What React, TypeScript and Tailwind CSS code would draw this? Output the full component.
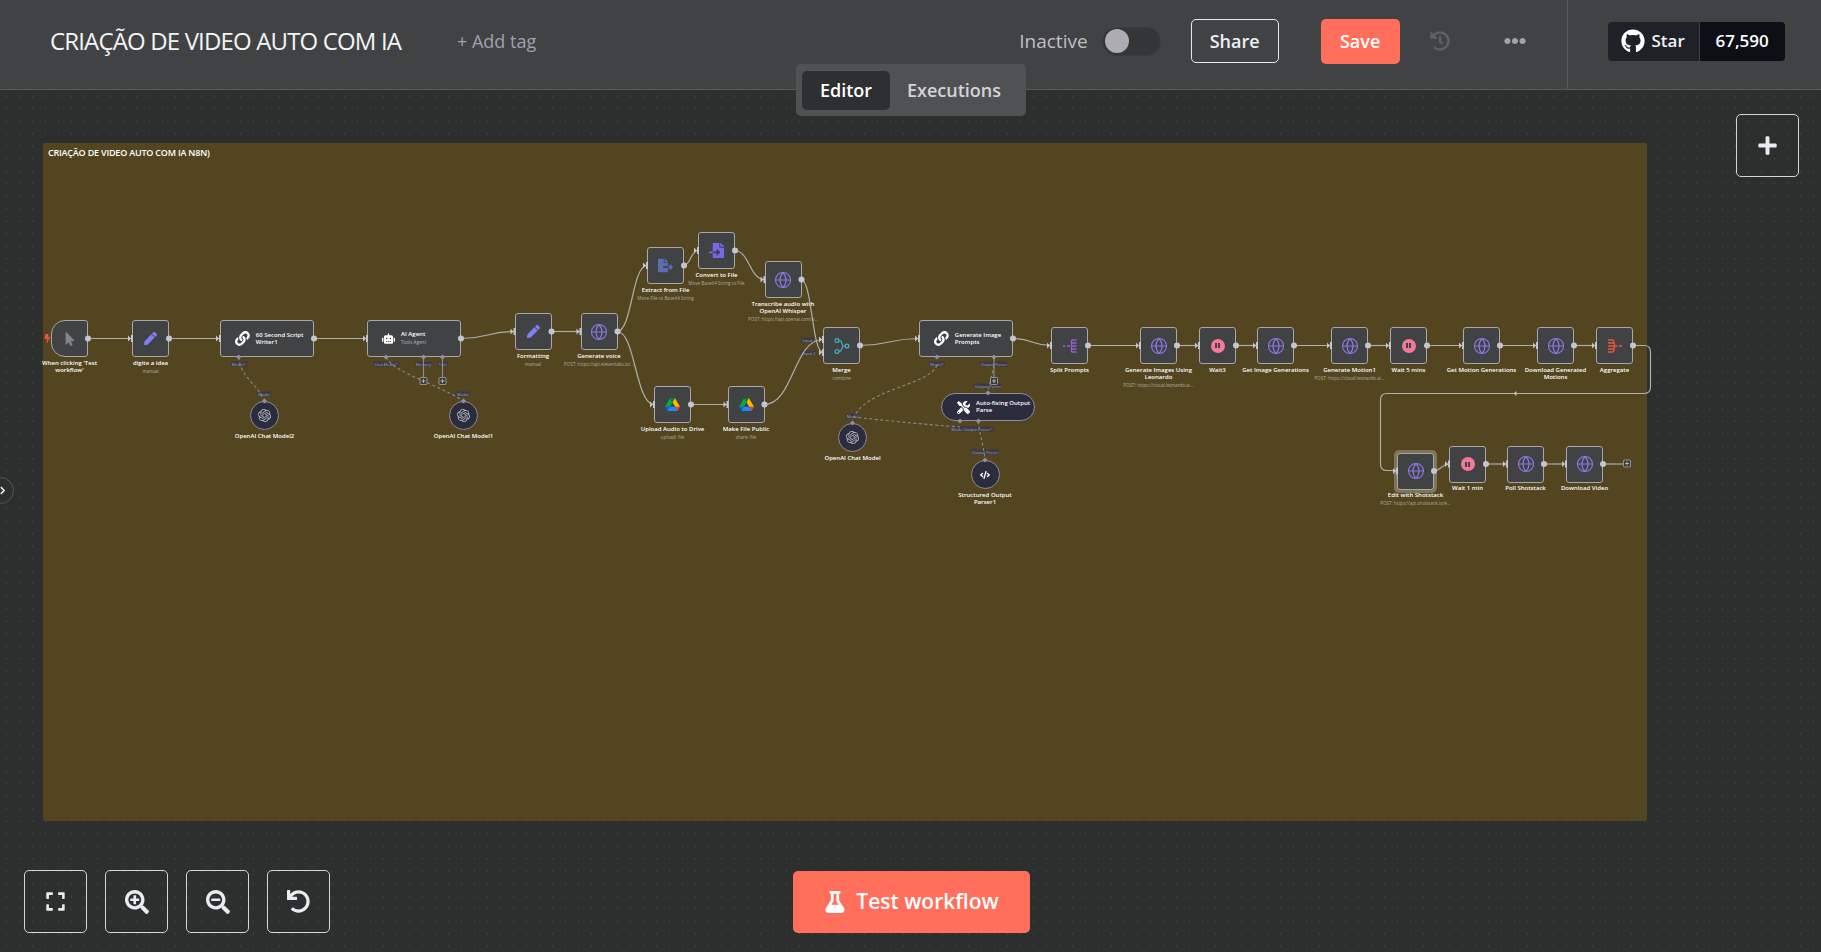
import type { ReactNode } from "react";
import {
  FaBolt,
  FaCode,
  FaEllipsisH,
  FaExpand,
  FaFileExport,
  FaFileImport,
  FaFlask,
  FaGithub,
  FaHistory,
  FaLink,
  FaMousePointer,
  FaPen,
  FaPlus,
  FaRobot,
  FaSearchMinus,
  FaSearchPlus,
  FaTools,
  FaUndo,
} from "react-icons/fa";
import { SiOpenai } from "react-icons/si";
import { Globe } from "lucide-react";

const globe = <Globe size={18} strokeWidth={1.5} className="text-[#8a78e6]" />;

const pen = <FaPen size={13} className="text-[#7f7ff2]" />;

const wait = (
  <span className="flex h-[14px] w-[14px] items-center justify-center gap-[1px] rounded-full bg-[#f4789a]">
    <span className="h-[5px] w-[1.6px] bg-[#414244]" />
    <span className="h-[5px] w-[1.6px] bg-[#414244]" />
  </span>
);

const drive = (
  <svg viewBox="0 0 87.3 78" className="h-[13px] w-[15px]">
    <path d="m6.6 66.85 3.85 6.65c.8 1.4 1.95 2.5 3.3 3.3l13.75-23.8h-27.5c0 1.55.4 3.1 1.2 4.5z" fill="#0066da" />
    <path d="m43.65 25-13.75-23.8c-1.35.8-2.5 1.9-3.3 3.3l-25.4 44a9.06 9.06 0 0 0 -1.2 4.5h27.5z" fill="#00ac47" />
    <path d="m73.55 76.8c1.35-.8 2.5-1.9 3.3-3.3l1.6-2.75 7.65-13.25c.8-1.4 1.2-2.95 1.2-4.5h-27.502l5.852 11.5z" fill="#ea4335" />
    <path d="m43.65 25 13.75-23.8c-1.35-.8-2.9-1.2-4.5-1.2h-18.5c-1.6 0-3.15.45-4.5 1.2z" fill="#00832d" />
    <path d="m59.8 53h-32.3l-13.75 23.8c1.35.8 2.9 1.2 4.5 1.2h50.8c1.6 0 3.15-.45 4.5-1.2z" fill="#2684fc" />
    <path d="m73.4 26.5-12.7-22c-.8-1.4-1.95-2.5-3.3-3.3l-13.75 23.8 16.15 28h27.45c0-1.55-.4-3.1-1.2-4.5z" fill="#ffba00" />
  </svg>
);

const merge = (
  <svg viewBox="0 0 16 16" className="h-[16px] w-[16px]" fill="none" stroke="#3fb6cb" strokeWidth="1.2">
    <circle cx="3" cy="2.6" r="1.9" />
    <circle cx="3" cy="13.4" r="1.9" />
    <circle cx="13" cy="8" r="1.9" />
    <path d="M5 2.8h1.4c1.6 0 1.4 5.2 3 5.2h1.6M5 13.2h1.4c1.6 0 1.4-5.2 3-5.2" />
  </svg>
);

const split = (
  <svg viewBox="0 0 16 14" className="h-[14px] w-[16px]" fill="none" stroke="#9b5fd0" strokeWidth="1.3">
    <path d="M1 7h2.5M5 7h3M9.5 1h5M9.5 4h5M9.5 7h5M9.5 10h5M9.5 13h5M9.5 1v12" />
  </svg>
);

const aggregate = (
  <svg viewBox="0 0 16 14" className="h-[14px] w-[16px]" fill="none" stroke="#e9573f" strokeWidth="1.3">
    <path d="M1 1h5M1 4h6M1 7h6M1 10h6M1 13h5M6 1c2 2 2 10 0 12M8 7h2.5M12 7h3" />
  </svg>
);

const openai = <SiOpenai size={13} className="text-[#b9b9c0]" />;

type NodeData = {
  x: number;
  y: number;
  w?: number;
  h?: number;
  kind?: "trigger" | "box" | "wide" | "round" | "pill";
  name: string;
  sub?: string;
  icon: ReactNode;
  labelWidth?: number;
  selected?: boolean;
};

const nodes: NodeData[] = [
  { x: 51, y: 320, kind: "trigger", name: "When clicking 'Test workflow'", icon: <FaMousePointer size={14} className="text-[#858585]" />, labelWidth: 62 },
  { x: 132, y: 320, name: "digite a idea", sub: "manual", icon: pen },
  { x: 220, y: 320, w: 94, kind: "wide", name: "60 Second Script Writer1", icon: <FaLink size={15} className="text-white" /> },
  { x: 367, y: 320, w: 94, kind: "wide", name: "AI Agent", sub: "Tools Agent", icon: <FaRobot size={13} className="text-white" /> },
  { x: 514.5, y: 313, name: "Formatting", sub: "manual", icon: pen },
  { x: 580.5, y: 313, name: "Generate voice", sub: "POST: https://api.elevenlabs.io/...", icon: globe },
  { x: 250, y: 401, w: 29, h: 29, kind: "round", name: "OpenAI Chat Model2", icon: openai },
  { x: 449, y: 401, w: 29, h: 29, kind: "round", name: "OpenAI Chat Model1", icon: openai },
  { x: 647, y: 247, name: "Extract from File", sub: "Move File to Base64 String", icon: <FaFileExport size={15} className="text-[#5d6cb4]" /> },
  { x: 698, y: 232, name: "Convert to File", sub: "Move Base64 String to File", icon: <FaFileImport size={15} className="text-[#7668ee]" /> },
  { x: 764.5, y: 261, name: "Transcribe audio with OpenAI Whisper", sub: "POST: https://api.openai.com/v...", icon: globe, labelWidth: 70 },
  { x: 654, y: 386, name: "Upload Audio to Drive", sub: "upload: file", icon: drive },
  { x: 727.5, y: 386, name: "Make File Public", sub: "share: file", icon: drive },
  { x: 823, y: 327, name: "Merge", sub: "combine", icon: merge },
  { x: 919, y: 320, w: 94, kind: "wide", name: "Generate Image Prompts", icon: <FaLink size={15} className="text-white" /> },
  { x: 941, y: 393, w: 94, h: 28, kind: "pill", name: "Auto-fixing Output Parse", icon: <FaTools size={13} className="text-white" /> },
  { x: 838, y: 423, w: 29, h: 29, kind: "round", name: "OpenAI Chat Model", icon: openai },
  { x: 970.5, y: 460, w: 29, h: 29, kind: "round", name: "Structured Output Parser1", icon: <FaCode size={10} className="text-white" />, labelWidth: 62 },
  { x: 1051, y: 327, name: "Split Prompts", icon: split },
  { x: 1140, y: 327, name: "Generate Images Using Leonardo", sub: "POST: https://cloud.leonardo.ai...", icon: globe, labelWidth: 76 },
  { x: 1199, y: 327, name: "Wait3", icon: wait },
  { x: 1257, y: 327, name: "Get Image Generations", icon: globe, labelWidth: 76 },
  { x: 1331, y: 327, name: "Generate Motion1", sub: "POST: https://cloud.leonardo.ai...", icon: globe },
  { x: 1390, y: 327, name: "Wait 5 mins", icon: wait },
  { x: 1463, y: 327, name: "Get Motion Generations", icon: globe, labelWidth: 78 },
  { x: 1537, y: 327, name: "Download Generated Motions", icon: globe, labelWidth: 68 },
  { x: 1596, y: 327, name: "Aggregate", icon: aggregate },
  { x: 1397, y: 452.5, name: "Edit with Shotstack", sub: "POST: https://api.shotstack.io/e...", icon: globe, selected: true },
  { x: 1449, y: 445.5, name: "Wait 1 min", icon: wait },
  { x: 1507, y: 445.5, name: "Poll Shotstack", icon: globe },
  { x: 1566, y: 445.5, name: "Download Video", icon: globe },
];

const chips = [
  { x: 239, y: 363.5, t: "Model", req: true },
  { x: 264, y: 393.5, t: "Model" },
  { x: 386, y: 363.5, t: "Chat Model", req: true },
  { x: 423.5, y: 363.5, t: "Memory" },
  { x: 442.5, y: 363.5, t: "Tool" },
  { x: 463, y: 393.5, t: "Model" },
  { x: 809, y: 339.5, t: "Input 1" },
  { x: 809, y: 352.5, t: "Input 2" },
  { x: 937, y: 363.5, t: "Model", req: true },
  { x: 994, y: 363.5, t: "Output Parser" },
  { x: 988, y: 385.5, t: "Output Parser" },
  { x: 852.5, y: 415.5, t: "Model" },
  { x: 957, y: 428.5, t: "Model" },
  { x: 978, y: 428.5, t: "Output Parser", req: true },
  { x: 985, y: 451.5, t: "Output Parser" },
];

const curve = (x1: number, y1: number, x2: number, y2: number) => {
  const m = (x1 + x2) / 2;
  return `M${x1} ${y1}C${m} ${y1} ${m} ${y2} ${x2} ${y2}`;
};

const edges = [
  curve(87, 338.5, 132, 338.5),
  curve(168, 338.5, 220, 338.5),
  curve(314, 338.5, 367, 338.5),
  curve(461, 338.5, 514.5, 331.5),
  curve(551, 331.5, 580.5, 331.5),
  curve(617, 331.5, 647, 265.5),
  curve(617, 331.5, 654, 404.5),
  curve(683.5, 265.5, 698, 250.5),
  curve(734.5, 250.5, 764.5, 279.5),
  curve(801, 279.5, 823, 352.5),
  curve(690.5, 404.5, 727.5, 404.5),
  curve(764, 404.5, 823, 339.5),
  curve(859.5, 345.5, 919, 338.5),
  curve(1013, 338.5, 1051, 345.5),
  curve(1087.5, 345.5, 1140, 345.5),
  curve(1176.5, 345.5, 1199, 345.5),
  curve(1235.5, 345.5, 1257, 345.5),
  curve(1293.5, 345.5, 1331, 345.5),
  curve(1367.5, 345.5, 1390, 345.5),
  curve(1426.5, 345.5, 1463, 345.5),
  curve(1499.5, 345.5, 1537, 345.5),
  curve(1573.5, 345.5, 1596, 345.5),
  "M1632.5 345.5H1644Q1650.5 345.5 1650.5 352V387Q1650.5 393.5 1644 393.5H1387Q1380.5 393.5 1380.5 400V464Q1380.5 470.5 1387 470.5H1397",
  curve(1433.5, 471, 1449, 464),
  curve(1485.5, 464, 1507, 464),
  curve(1544, 464, 1566, 464),
  curve(1602.5, 464, 1623, 464),
];

const solidGrey = ["M423.5 357V377", "M442.5 357V377", "M994 357V377"];

const dashed = [
  "M239 357C239 375 258 385 264.5 401",
  "M386 357C392 372 440 385 463 401",
  "M937 365C930 385 870 388 855 415",
  "M994 365C992 375 989 385 988 393",
  "M853 417C880 420 930 425 960 427",
  "M978 421C980 435 984 448 985 460",
];

const diamonds = [
  [238.7, 357], [264.5, 401], [386, 357], [423.5, 357], [442.5, 357], [463.5, 401],
  [937, 357], [994, 357], [988, 393], [960, 421], [978.5, 421], [852.5, 423], [985, 460],
];

function WorkflowNode({ node }: { node: NodeData }) {
  const { x, y, w = 37, h = 37, kind = "box" } = node;
  const hasInline = kind === "wide" || kind === "pill";
  const shape = {
    trigger: "rounded-l-[14px] rounded-r-[3px] border-[#a8a8a8] bg-[#414244] justify-center",
    box: "rounded-[3px] border-[#a8a8a8] bg-[#414244] justify-center",
    wide: "rounded-[3px] border-[#a8a8a8] bg-[#414244] pl-[14px] gap-[6px]",
    round: "rounded-full border-[#8e8e8e] bg-[#2b2c3e] justify-center",
    pill: "rounded-full border-[#8e8e8e] bg-[#2b2c3e] pl-[15px] gap-[6px]",
  }[kind];
  const labelWidth = node.labelWidth ?? 90;

  return (
    <>
      {node.selected && (
        <div
          className="absolute rounded-[5px] bg-[#7f7657]"
          style={{ left: x - 3, top: y - 3, width: w + 6, height: h + 6 }}
        />
      )}
      <div
        className={`absolute flex items-center border ${shape}`}
        style={{ left: x, top: y, width: w, height: h }}
      >
        {node.icon}
        {hasInline && (
          <div className="flex flex-col text-[6px] font-semibold leading-[7px] text-white" style={{ width: w - 36 }}>
            <span>{node.name}</span>
            {node.sub && <span className="text-[4.6px] font-normal leading-[9px] text-[#b5b5b5]">{node.sub}</span>}
          </div>
        )}
      </div>
      {!hasInline && (
        <div
          className="absolute flex flex-col items-center text-center"
          style={{ left: x + w / 2 - labelWidth / 2, top: y + h + 2.5, width: labelWidth }}
        >
          <span className="text-[6px] font-semibold leading-[7px] text-white">{node.name}</span>
          {node.sub && <span className="whitespace-nowrap text-[4.6px] leading-[8px] text-[#b0aca0]">{node.sub}</span>}
        </div>
      )}
    </>
  );
}

function Handles() {
  const main = nodes.filter((n) => n.kind !== "round" && n.kind !== "pill");
  return (
    <svg className="pointer-events-none absolute left-0 top-0 h-[952px] w-[1821px]" viewBox="0 0 1821 952">
      {edges.map((d, i) => (
        <path key={i} d={d} fill="none" stroke="#aeaeae" strokeWidth="1.2" />
      ))}
      {solidGrey.map((d, i) => (
        <path key={i} d={d} fill="none" stroke="#8d8d8d" strokeWidth="1.1" />
      ))}
      {dashed.map((d, i) => (
        <path key={i} d={d} fill="none" stroke="#8a8a8a" strokeWidth="1.1" strokeDasharray="3 2.5" />
      ))}
      <path d="M1513.5 393.5l3-2.5v5z" fill="#c3c6d0" />
      {main.map((n, i) => {
        const w = n.w ?? 37;
        const cy = n.y + 18.5;
        return (
          <g key={i} fill="#c3c6d0">
            <circle cx={n.x + w} cy={cy} r="3" />
            {n.kind !== "trigger" && (
              <path d={n.name === "Merge" ? `M${n.x - 4} 336.5l3 3-3 3zM${n.x - 1} 336h2v7h-2zM${n.x - 4} 349.5l3 3-3 3zM${n.x - 1} 349h2v7h-2z` : `M${n.x - 4} ${cy - 3}l3 3-3 3zM${n.x - 1} ${cy - 3.5}h2v7h-2z`} />
            )}
          </g>
        );
      })}
      {diamonds.map(([x, y], i) => (
        <rect key={i} x={x - 1.8} y={y - 1.8} width="3.6" height="3.6" fill="#8f92a4" transform={`rotate(45 ${x} ${y})`} />
      ))}
      {[[423.5, 381], [442.5, 381], [994, 381], [1627, 463.5]].map(([x, y], i) => (
        <g key={i}>
          <rect x={x - 3.5} y={y - 3.5} width="7" height="7" rx="1" fill="#3a3b3e" stroke="#b5b5b5" strokeWidth="0.7" />
          <path d={`M${x - 2} ${y}h4M${x} ${y - 2}v4`} stroke="#d8d8d8" strokeWidth="0.7" />
        </g>
      ))}
    </svg>
  );
}

const zoomButton = "flex h-[63px] w-[63px] items-center justify-center rounded-[5px] border border-[#d5d5d5] text-[#e9ebf0]";

export default function App() {
  return (
    <div className="relative flex h-[952px] w-[1821px] flex-col overflow-hidden bg-[#2d2e2e] font-['Open_Sans','Liberation_Sans',sans-serif]">
      <header className="relative z-10 flex h-[90px] shrink-0 items-center border-b border-[#57585a] bg-[#414244] pb-[7px]">
        <div className="ml-[50px] w-[407px] text-[24px] tracking-[-0.85px] text-[#f3f4f6]">CRIAÇÃO DE VIDEO AUTO COM IA</div>
        <span className="text-[18px] font-medium text-[#9ca3af]">+ Add tag</span>

        <span className="ml-[483px] text-[19px] font-medium text-[#bfc0c5]">Inactive</span>
        <div className="ml-[14px] flex h-[29px] w-[59px] items-center rounded-full border border-[#3a3b3d] bg-[#343537] pl-[2px]">
          <span className="h-[24px] w-[24px] rounded-full bg-[#acacb2]" />
        </div>
        <button className="ml-[30px] flex h-[44px] w-[88px] items-center justify-center rounded-[5px] border border-[#e8e8e8] text-[18px] font-semibold text-[#eef0f4]">
          Share
        </button>
        <button className="ml-[42px] flex h-[45px] w-[79px] items-center justify-center rounded-[5px] bg-[#ff6f5c] text-[18px] font-semibold text-white">
          Save
        </button>
        <FaHistory size={20} className="ml-[30px] text-[#5f6063]" />
        <FaEllipsisH size={22} className="ml-[54px] text-[#a2a3a8]" />
        <div className="ml-[41px] h-[89px] w-px self-start bg-[#57585a]" />
        <div className="ml-[40px] flex h-[39px] w-[177px] overflow-hidden rounded-[4px] text-[17px] font-semibold">
          <div className="flex w-[92px] items-center justify-center gap-[6px] border-r border-[#3d4148] bg-[#1e2228] text-[#eef0f4]">
            <FaGithub size={24} className="text-white" />
            Star
          </div>
          <div className="flex flex-1 items-center justify-center bg-[#0c0f15] text-white">67,590</div>
        </div>

        <div className="absolute left-[796px] top-[64px] flex h-[52px] w-[230px] items-center gap-[17px] rounded-[5px] bg-[#505153] pl-[6px] pt-[1px] text-[18px] font-semibold">
          <span className="flex h-[39px] w-[88px] items-center justify-center rounded-[5px] bg-[#2e2f30] text-white">Editor</span>
          <span className="text-[#d3d4d8]">Executions</span>
        </div>
      </header>

      <main className="relative flex-1 bg-[radial-gradient(circle,#4c4d4e_0.7px,transparent_1px)] bg-[size:13px_12.5px]">
        <div className="absolute -top-[90px] left-0 h-[952px] w-[1821px]">
          <div className="absolute left-[43px] top-[143px] h-[678px] w-[1604px] rounded-[2px] bg-[#52451f] pl-[5px] pt-[4px] text-[9px] font-semibold leading-[11px] tracking-[-0.2px] text-white">
            CRIAÇÃO DE VIDEO AUTO COM IA N8N)
          </div>
          <FaBolt size={9} className="absolute left-[43px] top-[334px] text-[#f0503c]" />
          {nodes.map((n) => (
            <WorkflowNode key={n.name} node={n} />
          ))}
          {chips.map((c, i) => (
            <span
              key={i}
              className="absolute -translate-x-1/2 -translate-y-1/2 whitespace-nowrap bg-[#3a3a46] px-[1px] text-[4px] leading-[5px] text-[#a7a9bd]"
              style={{ left: c.x, top: c.y }}
            >
              {c.t}
              {c.req && <span className="text-[#f0503c]">*</span>}
            </span>
          ))}
          <Handles />
        </div>

        <button className={`absolute left-[1736px] top-[24px] ${zoomButton}`}>
          <FaPlus size={21} />
        </button>

        <div className="absolute -left-[13px] top-[387px] flex h-[27px] w-[27px] items-center justify-end rounded-full border border-[#55565a] bg-[#2d2e2e] pr-[8px]">
          <svg viewBox="0 0 6 10" className="h-[9px] w-[5px]" fill="none" stroke="#e5e7eb" strokeWidth="2">
            <path d="M1 1l4 4-4 4" />
          </svg>
        </div>

        <div className="absolute left-[24px] top-[780px] flex gap-[18px]">
          <button className={zoomButton}><FaExpand size={21} /></button>
          <button className={zoomButton}><FaSearchPlus size={24} /></button>
          <button className={zoomButton}><FaSearchMinus size={24} /></button>
          <button className={zoomButton}><FaUndo size={23} /></button>
        </div>

        <button className="absolute left-[793px] top-[781px] flex h-[62px] w-[237px] items-center justify-center gap-[10px] rounded-[5px] bg-[#ff6f5c] text-[21px] font-semibold text-white">
          <FaFlask size={22} />
          Test workflow
        </button>
      </main>
    </div>
  );
}
